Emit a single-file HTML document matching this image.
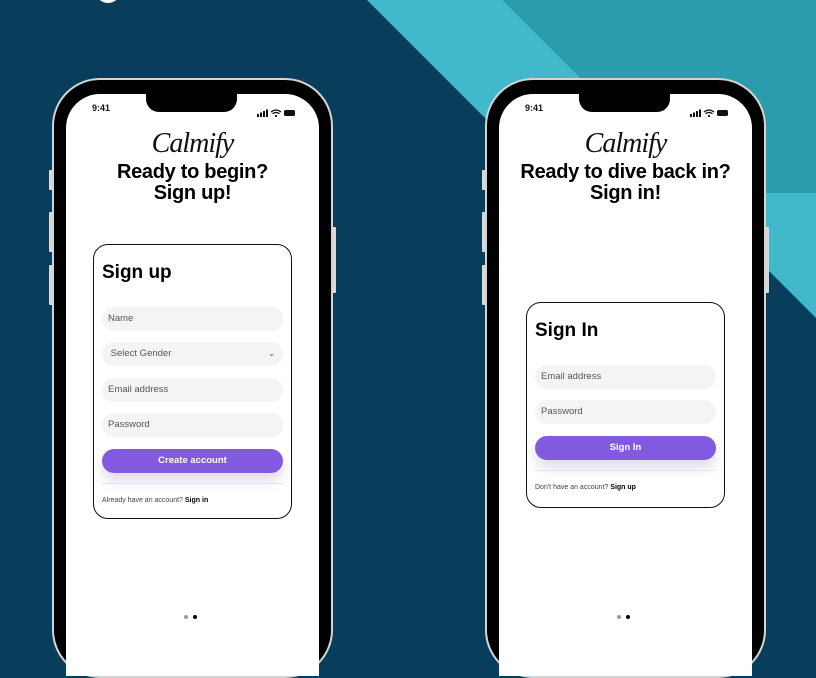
<!DOCTYPE html>
<html><head><meta charset="utf-8"><style>
*{margin:0;padding:0;box-sizing:border-box}
body{width:816px;height:627px;overflow:hidden;background:#083d5c;position:relative;font-family:"Liberation Sans",sans-serif}
.bg{position:absolute;left:0;top:0}
.phone{position:absolute;top:78px;width:281px;height:600px;border-radius:48px;background:#000;border:2px solid #d4d4d4}
.btn{position:absolute;background:#d8d8d8;width:4px;border-radius:1px}
.screen{position:absolute;left:12px;top:14px;right:12px;bottom:0;background:#fff;border-radius:34px 34px 0 0;overflow:hidden}
.notch{position:absolute;top:0;left:80px;width:91px;height:18px;background:#000;border-radius:0 0 13px 13px}
.time{position:absolute;left:26px;top:9px;font-size:9px;font-weight:bold;color:#111}
.icons{position:absolute;right:22px;top:10px}
.logo{position:absolute;left:0;right:0;top:34px;text-align:center;font-family:"Liberation Serif",serif;font-style:italic;font-size:28px;color:#111;letter-spacing:-1px}
.h{position:absolute;left:0;right:0;top:68px;text-align:center;font-size:20px;font-weight:bold;line-height:21px;color:#000;letter-spacing:-0.3px}
.card{position:absolute;left:27px;width:199px;border:1.5px solid #111;border-radius:15px;background:#fff}
.card h2{position:absolute;left:8px;font-size:19px;font-weight:bold;color:#000}
.in{position:absolute;left:8px;width:181px;height:24px;border-radius:12px;background:#f4f4f4;font-size:9.5px;color:#555;padding:0 6px;line-height:24px}
.b{position:absolute;left:8px;width:181px;height:24px;border-radius:12px;background:#825ae0;color:#fff;font-size:9.5px;font-weight:bold;text-align:center;line-height:24px;box-shadow:0 8px 12px rgba(120,100,170,.22)}
.ln{position:absolute;left:8px;width:181px;height:1px;background:#e4e2ea}
.ft{position:absolute;left:8px;font-size:7px;color:#444}
.ft b{color:#000}
.dots{position:absolute;top:521px;left:118px;height:4px;line-height:0}
.dots i{display:inline-block;width:4px;height:4px;border-radius:50%;margin-right:5px;background:#999}
.dots i+i{background:#000}
</style></head><body>
<svg class="bg" width="816" height="627">
<polygon points="367,0 503,0 696,193 816,193 816,318 700,202 600,300 490,123" fill="#41b9ca"/>
<polygon points="503,0 816,0 816,193 696,193" fill="#2a9cab"/>
<circle cx="108" cy="-10" r="13" fill="#fff"/>
</svg>

<div class="btn" style="left:49px;top:170px;height:20px"></div>
<div class="btn" style="left:49px;top:212px;height:40px"></div>
<div class="btn" style="left:49px;top:265px;height:40px"></div>
<div class="btn" style="left:332px;top:227px;height:66px"></div>
<div class="phone" style="left:52px">
 <div class="screen">
  <div class="notch"></div>
  <div class="time">9:41</div>
  <div class="icons"><svg width="40" height="8"><rect x="0" y="5" width="2" height="3" fill="#111"/><rect x="3" y="3.5" width="2" height="4.5" fill="#111"/><rect x="6" y="2" width="2" height="6" fill="#111"/><rect x="9" y="0.5" width="2" height="7.5" fill="#111"/><path d="M14 3 Q19 -1 24 3 M15.5 4.8 Q19 2 22.5 4.8" stroke="#111" stroke-width="1.3" fill="none"/><circle cx="19" cy="7" r="1.1" fill="#111"/><rect x="27" y="1" width="11" height="6" rx="1.5" fill="#111"/></svg></div>
  <div class="logo">Calmify</div>
  <div class="h">Ready to begin?<br>Sign up!</div>
  <div class="card" style="top:150px;height:275px">
   <h2 style="top:17px">Sign up</h2>
   <div class="in" style="top:62px">Name</div>
   <div class="in" style="top:97px">&nbsp;Select Gender<span style="position:absolute;right:8px;font-size:8px">&#8964;</span></div>
   <div class="in" style="top:133px">Email address</div>
   <div class="in" style="top:168px">Password</div>
   <div class="b" style="top:204px">Create account</div>
   <div class="ln" style="top:238px"></div>
   <div class="ft" style="top:252px">Already have an account? <b>Sign in</b></div>
  </div>
  <div class="dots"><i></i><i></i></div>
 </div>
</div>

<div class="btn" style="left:482px;top:170px;height:20px"></div>
<div class="btn" style="left:482px;top:212px;height:40px"></div>
<div class="btn" style="left:482px;top:265px;height:40px"></div>
<div class="btn" style="left:765px;top:227px;height:66px"></div>
<div class="phone" style="left:485px">
 <div class="screen">
  <div class="notch"></div>
  <div class="time">9:41</div>
  <div class="icons"><svg width="40" height="8"><rect x="0" y="5" width="2" height="3" fill="#111"/><rect x="3" y="3.5" width="2" height="4.5" fill="#111"/><rect x="6" y="2" width="2" height="6" fill="#111"/><rect x="9" y="0.5" width="2" height="7.5" fill="#111"/><path d="M14 3 Q19 -1 24 3 M15.5 4.8 Q19 2 22.5 4.8" stroke="#111" stroke-width="1.3" fill="none"/><circle cx="19" cy="7" r="1.1" fill="#111"/><rect x="27" y="1" width="11" height="6" rx="1.5" fill="#111"/></svg></div>
  <div class="logo">Calmify</div>
  <div class="h">Ready to dive back in?<br>Sign in!</div>
  <div class="card" style="top:208px;height:206px">
   <h2 style="top:17px">Sign In</h2>
   <div class="in" style="top:62px">Email address</div>
   <div class="in" style="top:97px">Password</div>
   <div class="b" style="top:133px">Sign In</div>
   <div class="ln" style="top:167px"></div>
   <div class="ft" style="top:181px">Don't have an account? <b>Sign up</b></div>
  </div>
  <div class="dots"><i style="background:#999"></i><i></i></div>
 </div>
</div>
</body></html>
